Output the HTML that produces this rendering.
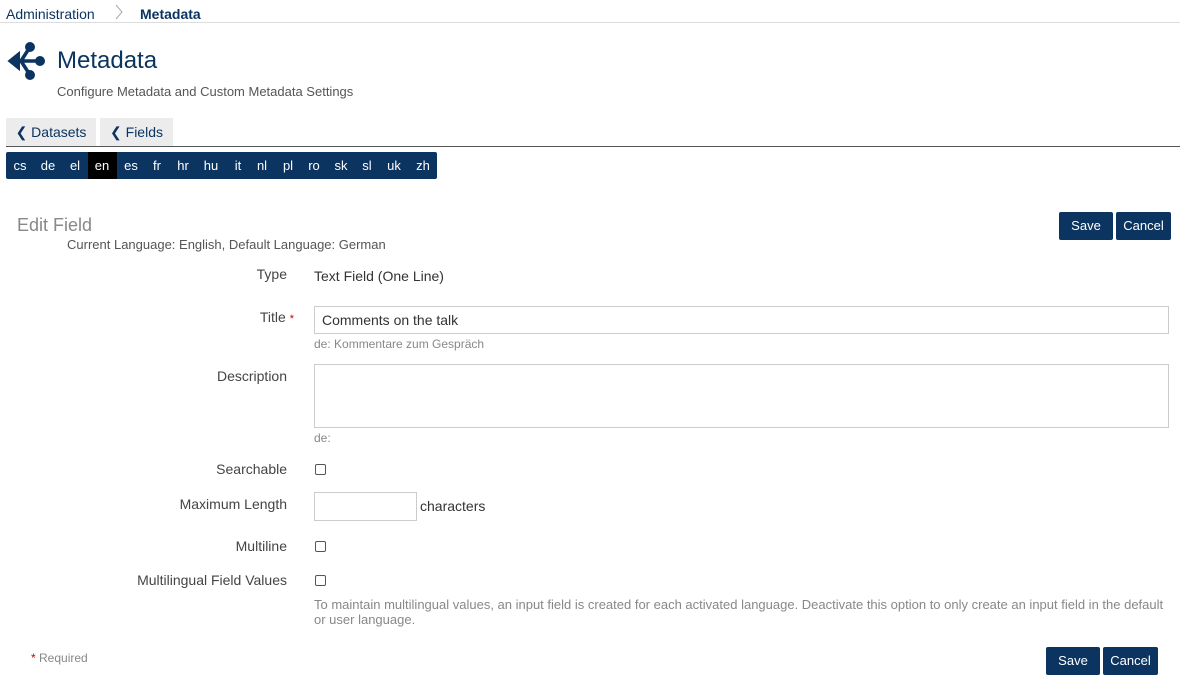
<!DOCTYPE html>
<html><head><meta charset="utf-8"><style>
body{margin:0;width:1180px;height:692px;background:#fff;font-family:"Liberation Sans",sans-serif;position:relative;overflow:hidden;color:#333}
.a{position:absolute;white-space:nowrap}
.navy{color:#0b3460}
.btn{position:absolute;background:#0b3460;color:#fff;font-size:13px;text-align:center;border-radius:2px;line-height:28px;height:28px}
.tab{position:absolute;background:#ececec;color:#0b3460;font-size:14px;line-height:28px;height:28px;top:118px}
.lbl{position:absolute;right:893px;font-size:14px;color:#444;white-space:nowrap}
.lang{position:absolute;top:152px;height:27px;line-height:27px;color:#fff;font-size:13px;text-align:center}
.cb{position:absolute;left:315px;width:9px;height:9px;border:1px solid #555;border-radius:2px;background:#fff}
.hint{position:absolute;left:314px;font-size:12px;color:#888;white-space:nowrap}
</style></head><body>
<div class="a navy" style="left:6px;top:6px;font-size:14px">Administration</div>
<svg class="a" style="left:114px;top:4px" width="10" height="16" viewBox="0 0 10 16"><path d="M2 1 L8 8 L2 15" stroke="#aaa" fill="none" stroke-width="1"/></svg>
<div class="a navy" style="left:140px;top:6px;font-size:14px;font-weight:bold">Metadata</div>
<div class="a" style="left:0;top:22px;width:1180px;height:1px;background:#ddd"></div>
<svg class="a" style="left:7px;top:41px" width="38" height="40" viewBox="0 0 38 40">
<g fill="#0b3460" stroke="#0b3460"><circle cx="23" cy="6" r="4.5"/><circle cx="33" cy="20" r="4.5"/><circle cx="23" cy="34" r="4.5"/>
<path d="M2 20 L12 12 L12 28 Z" stroke-width="2"/><path d="M10 20 H33 M14 20 L23 6 M14 20 L23 34" stroke-width="3.5" fill="none"/></g></svg>
<div class="a navy" style="left:57px;top:47px;font-size:24px">Metadata</div>
<div class="a" style="left:57px;top:84px;font-size:13px;color:#555">Configure Metadata and Custom Metadata Settings</div>
<div class="tab" style="left:6px;width:90px;text-align:center">&#10094; Datasets</div>
<div class="tab" style="left:100px;width:73px;text-align:center">&#10094; Fields</div>
<div class="a" style="left:6px;top:146px;width:1174px;height:1px;background:#555"></div>
<div class="a" style="left:6px;top:152px;width:431px;height:27px;background:#0b3460;border-radius:2px"></div>
<div class="a" style="left:88px;top:152px;width:29px;height:27px;background:#000"></div>
<div class="lang" style="left:8px;width:24px">cs</div><div class="lang" style="left:36px;width:24px">de</div>
<div class="lang" style="left:63px;width:24px">el</div><div class="lang" style="left:90px;width:24px">en</div>
<div class="lang" style="left:119px;width:24px">es</div><div class="lang" style="left:145px;width:24px">fr</div>
<div class="lang" style="left:171px;width:24px">hr</div><div class="lang" style="left:199px;width:24px">hu</div>
<div class="lang" style="left:226px;width:24px">it</div><div class="lang" style="left:250px;width:24px">nl</div>
<div class="lang" style="left:276px;width:24px">pl</div><div class="lang" style="left:302px;width:24px">ro</div>
<div class="lang" style="left:329px;width:24px">sk</div><div class="lang" style="left:355px;width:24px">sl</div>
<div class="lang" style="left:382px;width:24px">uk</div><div class="lang" style="left:411px;width:24px">zh</div>
<div class="a" style="left:17px;top:215px;font-size:18px;color:#888">Edit Field</div>
<div class="a" style="left:67px;top:237px;font-size:13px;color:#555">Current Language: English, Default Language: German</div>
<div class="btn" style="left:1059px;top:212px;width:54px">Save</div>
<div class="btn" style="left:1116px;top:212px;width:55px">Cancel</div>
<div class="lbl" style="top:266px">Type</div>
<div class="a" style="left:314px;top:268px;font-size:14px;color:#333">Text Field (One Line)</div>
<div class="lbl" style="top:309px;right:886px">Title <span style="color:#c00;font-size:11px">*</span></div>
<div class="a" style="left:314px;top:306px;width:855px;height:28px;border:1px solid #ccc;box-sizing:border-box"></div>
<div class="a" style="left:322px;top:312px;font-size:14px">Comments on the talk</div>
<div class="hint" style="top:337px">de: Kommentare zum Gespräch</div>
<div class="lbl" style="top:368px">Description</div>
<div class="a" style="left:314px;top:364px;width:855px;height:64px;border:1px solid #ccc;box-sizing:border-box"></div>
<div class="hint" style="top:431px">de:</div>
<div class="lbl" style="top:461px">Searchable</div>
<div class="cb" style="top:464px"></div>
<div class="lbl" style="top:496px">Maximum Length</div>
<div class="a" style="left:314px;top:492px;width:103px;height:29px;border:1px solid #ccc;box-sizing:border-box"></div>
<div class="a" style="left:420px;top:498px;font-size:14px">characters</div>
<div class="lbl" style="top:538px">Multiline</div>
<div class="cb" style="top:541px"></div>
<div class="lbl" style="top:572px">Multilingual Field Values</div>
<div class="cb" style="top:575px"></div>
<div class="hint" style="top:597px;font-size:13px;line-height:15px;white-space:normal;width:860px">To maintain multilingual values, an input field is created for each activated language. Deactivate this option to only create an input field in the default or user language.</div>
<div class="a" style="left:31px;top:651px;font-size:12px;color:#888"><span style="color:#c00">*</span> Required</div>
<div class="btn" style="left:1046px;top:647px;width:54px">Save</div>
<div class="btn" style="left:1103px;top:647px;width:55px">Cancel</div>
</body></html>
